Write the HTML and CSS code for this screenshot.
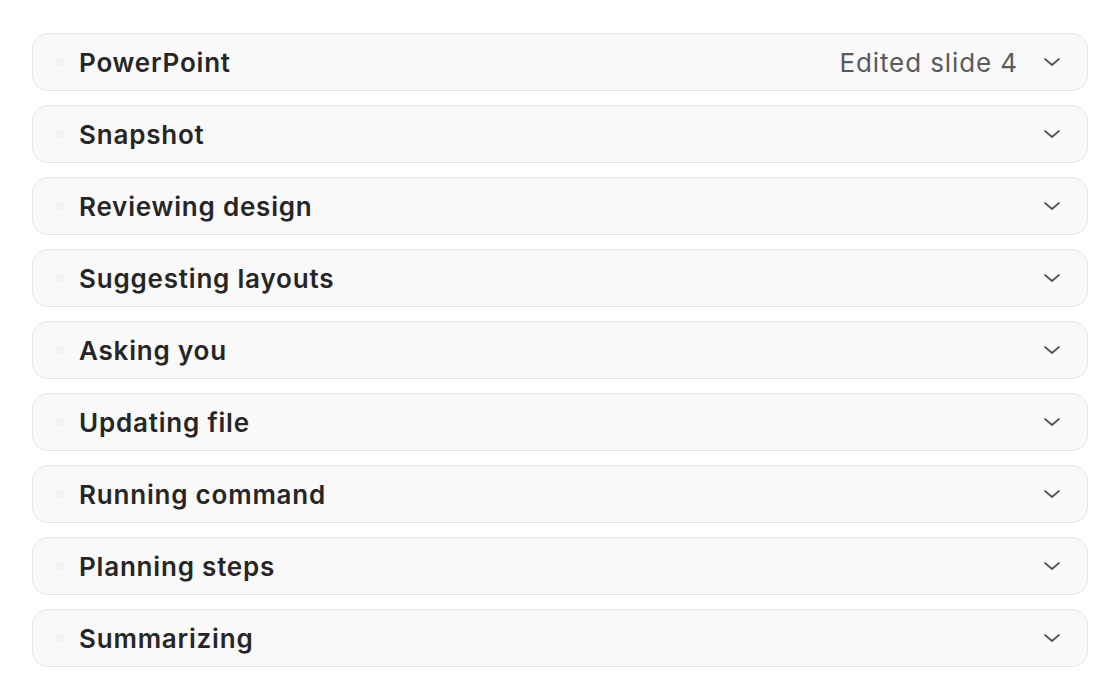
FILE: index.html
```html
<!DOCTYPE html>
<html lang="en">
<head>
    <meta charset="UTF-8">
    <title>Steps</title>
    <link rel="stylesheet" href="styles.css">
</head>
<body>
    <div class="steps">
        <div class="step">
            <span class="dot"></span>
            <span class="title">PowerPoint</span>
            <span class="meta">Edited slide 4</span>
            <svg class="chevron" viewBox="0 0 16 8"><path d="M1 1l7 6 7-6"/></svg>
        </div>
        <div class="step">
            <span class="dot"></span>
            <span class="title">Snapshot</span>
            <svg class="chevron" viewBox="0 0 16 8"><path d="M1 1l7 6 7-6"/></svg>
        </div>
        <div class="step">
            <span class="dot"></span>
            <span class="title">Reviewing design</span>
            <svg class="chevron" viewBox="0 0 16 8"><path d="M1 1l7 6 7-6"/></svg>
        </div>
        <div class="step">
            <span class="dot"></span>
            <span class="title">Suggesting layouts</span>
            <svg class="chevron" viewBox="0 0 16 8"><path d="M1 1l7 6 7-6"/></svg>
        </div>
        <div class="step">
            <span class="dot"></span>
            <span class="title">Asking you</span>
            <svg class="chevron" viewBox="0 0 16 8"><path d="M1 1l7 6 7-6"/></svg>
        </div>
        <div class="step">
            <span class="dot"></span>
            <span class="title">Updating file</span>
            <svg class="chevron" viewBox="0 0 16 8"><path d="M1 1l7 6 7-6"/></svg>
        </div>
        <div class="step">
            <span class="dot"></span>
            <span class="title">Running command</span>
            <svg class="chevron" viewBox="0 0 16 8"><path d="M1 1l7 6 7-6"/></svg>
        </div>
        <div class="step">
            <span class="dot"></span>
            <span class="title">Planning steps</span>
            <svg class="chevron" viewBox="0 0 16 8"><path d="M1 1l7 6 7-6"/></svg>
        </div>
        <div class="step">
            <span class="dot"></span>
            <span class="title">Summarizing</span>
            <svg class="chevron" viewBox="0 0 16 8"><path d="M1 1l7 6 7-6"/></svg>
        </div>
    </div>
</body>
</html>
```

FILE: styles.css
```css
body {
    margin: 0;
    background: #ffffff;
    font-family: Inter, "Noto Sans", sans-serif;
}
.steps {
    display: flex;
    flex-direction: column;
    gap: 14px;
    padding: 33px 32px 0 32px;
}
.step {
    display: flex;
    align-items: center;
    height: 58px;
    box-sizing: border-box;
    border: 1.5px solid #e5e5e5;
    border-radius: 16px;
    background: #f9f9f9;
    padding: 0 27px 0 23px;
}
.dot {
    width: 9px;
    height: 9px;
    border-radius: 50%;
    background: #f2f2f2;
    margin-right: 14px;
    flex-shrink: 0;
}
.title {
    flex: 1;
    font-size: 26px;
    font-weight: 560;
    color: #262626;
    letter-spacing: 0.8px;
}
.meta {
    font-size: 26px;
    color: #5a5a5a;
    margin-right: 26px;
    letter-spacing: 0.9px;
}
.chevron {
    width: 16px;
    height: 8px;
    fill: none;
    stroke: #555555;
    stroke-width: 1.8;
    stroke-linecap: round;
    stroke-linejoin: round;
}
```
